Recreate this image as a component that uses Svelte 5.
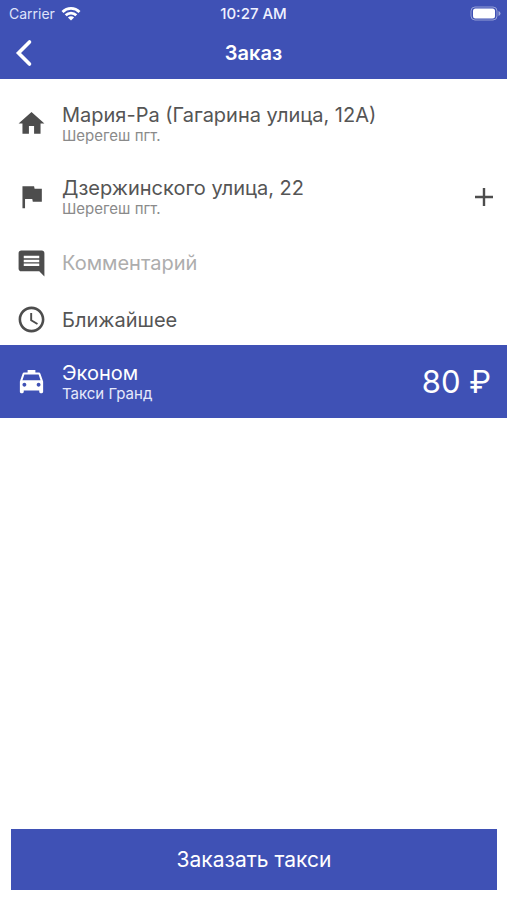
<script>
  let comment = $state('');
</script>

<div class="screen">
  <header>
    <div class="status">
      <div class="carrier">
        <span>Carrier</span>
        <svg width="20" height="14" viewBox="0 0 20 14" fill="none" stroke="#fff" stroke-width="2.8" aria-hidden="true">
          <path d="M1.500 4.900a12.200 12.200 0 0 1 17 0M4.700 8.300a7.600 7.600 0 0 1 10.600 0" />
          <path d="M6.900 10.500a4.400 4.400 0 0 1 6.200 0L10 13.600z" fill="#fff" stroke="none" />
        </svg>
      </div>
      <span class="time">10:27 AM</span>
      <div class="battery">
        <svg width="31" height="15" viewBox="0 0 31 15" aria-hidden="true">
          <rect x="1" y="1" width="26" height="13" rx="4" fill="none" stroke="#fff" stroke-opacity=".45" />
          <rect x="3" y="2.500" width="22" height="10" rx="2.500" fill="#fff" />
          <path d="M28.500 5q2 .8 2 2.500t-2 2.500z" fill="#fff" fill-opacity=".5" />
        </svg>
      </div>
    </div>
    <div class="nav">
      <button class="back" aria-label="Назад">
        <svg width="18" height="28" viewBox="0 0 18 28" fill="none" stroke="#fff" stroke-width="3.600" stroke-linecap="round" stroke-linejoin="miter" aria-hidden="true">
          <path d="M14.500 3 3.500 14l11 11" />
        </svg>
      </button>
      <h1>Заказ</h1>
    </div>
  </header>

  <main>
    <section class="route">
      <div class="row tall">
        <svg class="icon" viewBox="0 0 24 24" aria-hidden="true"><path d="M10 20v-6h4v6h5v-8h3L12 3 2 12h3v8z" /></svg>
        <div class="text">
          <span class="title">Мария-Ра (Гагарина улица, 12А)</span>
          <span class="sub">Шерегеш пгт.</span>
        </div>
      </div>
      <div class="row tall">
        <svg class="icon" viewBox="0 0 24 24" aria-hidden="true"><path d="M14.400 6 14 4H5v17h2v-7h5.600l.4 2h7V6z" /></svg>
        <div class="text">
          <span class="title">Дзержинского улица, 22</span>
          <span class="sub">Шерегеш пгт.</span>
        </div>
        <button class="add" aria-label="Добавить адрес">
          <svg width="20" height="20" viewBox="0 0 20 20" stroke="#4d4d4d" stroke-width="2.400" aria-hidden="true"><path d="M10 1v18M1 10h18" /></svg>
        </button>
      </div>
      <label class="row comment">
        <svg class="icon" viewBox="0 0 24 24" aria-hidden="true"><path d="M21.990 4c0-1.100-.89-2-1.990-2H4c-1.100 0-2 .9-2 2v12c0 1.100.9 2 2 2h14l4 4-.01-18zM18 14H6v-2h12v2zm0-3H6V9h12v2zm0-3H6V6h12v2z" /></svg>
        <input type="text" placeholder="Комментарий" aria-label="Комментарий" bind:value={comment} />
      </label>
      <div class="row when">
        <svg class="icon" viewBox="0 0 24 24" aria-hidden="true"><path d="M11.990 2C6.470 2 2 6.480 2 12s4.470 10 9.990 10C17.520 22 22 17.520 22 12S17.520 2 11.990 2zM12 20c-4.420 0-8-3.580-8-8s3.580-8 8-8 8 3.580 8 8-3.580 8-8 8zm.5-13H11v6l5.250 3.150.75-1.230-4.500-2.670z" /></svg>
        <span class="title">Ближайшее</span>
      </div>
    </section>

    <section class="row tall tariff">
      <svg class="icon" viewBox="0 0 24 24" aria-hidden="true"><path d="M18.920 6.010C18.720 5.420 18.160 5 17.500 5H15V3H9v2H6.500c-.66 0-1.210.42-1.420 1.010L3 12v8c0 .55.45 1 1 1h1c.55 0 1-.45 1-1v-1h12v1c0 .55.45 1 1 1h1c.55 0 1-.45 1-1v-8l-2.080-5.990zM6.500 16c-.83 0-1.500-.67-1.500-1.500S5.670 13 6.500 13s1.500.67 1.500 1.500S7.330 16 6.500 16zm11 0c-.83 0-1.500-.67-1.500-1.500s.67-1.500 1.500-1.500 1.500.67 1.500 1.500-.67 1.500-1.500 1.500zM5 11l1.500-4.500h11L19 11H5z" /></svg>
      <div class="text">
        <span class="title">Эконом</span>
        <span class="sub">Такси Гранд</span>
      </div>
      <span class="price">80 ₽</span>
    </section>
  </main>

  <footer>
    <button class="order">Заказать такси</button>
  </footer>
</div>

<style>
  :global(body) {
    margin: 0;
    background: #fff;
  }

  .screen {
    display: flex;
    flex-direction: column;
    min-height: 100vh;
    box-sizing: border-box;
    font-family: Inter, 'Noto Sans', sans-serif;
    color: #555;
  }

  button {
    border: 0;
    padding: 0;
    background: none;
    font: inherit;
    cursor: pointer;
  }

  svg {
    display: block;
    flex: none;
  }

  header {
    background: #3f51b5;
    color: #fff;
  }

  .status {
    display: grid;
    grid-template-columns: 1fr auto 1fr;
    align-items: center;
    height: 27px;
    padding: 0 6px;
  }

  .carrier {
    display: flex;
    align-items: center;
    gap: 6px;
    padding-left: 3px;
    color: #dfe3fa;
    font-size: 14px;
  }

  .time {
    color: #f0f2ff;
    font-size: 15px;
    font-weight: 500;
  }

  .battery {
    justify-self: end;
  }

  .nav {
    display: grid;
    grid-template-columns: 1fr auto 1fr;
    align-items: center;
    height: 52px;
    padding: 0 15px;
  }

  .back {
    justify-self: start;
  }

  h1 {
    margin: 0;
    font-size: 20px;
    line-height: 24px;
    font-weight: 600;
  }

  main {
    flex: 1;
  }

  .route {
    padding-top: 8px;
  }

  .row {
    display: flex;
    align-items: center;
    gap: 15px;
    padding: 0 16px;
    box-sizing: border-box;
  }

  .tall {
    min-height: 73px;
  }

  .comment {
    min-height: 58px;
    padding-top: 2px;
  }

  .when {
    min-height: 54px;
    padding-top: 3px;
  }

  .icon {
    width: 31px;
    height: 31px;
    fill: #4d4d4d;
  }

  .text {
    display: flex;
    flex-direction: column;
    flex: 1;
    min-width: 0;
  }

  .title {
    font-size: 20px;
    line-height: 24px;
  }

  .sub {
    color: #8a8a8a;
    font-size: 15px;
    line-height: 18px;
  }

  .add {
    margin-right: -3px;
  }

  input {
    flex: 1;
    min-width: 0;
    border: 0;
    padding: 0;
    outline: none;
    background: none;
    color: #555;
    font-family: inherit;
    font-size: 20px;
    line-height: 24px;
  }

  input::placeholder {
    color: #adadad;
    opacity: 1;
  }

  .tariff {
    background: #3f51b5;
    color: #fff;
  }

  .tariff .icon {
    fill: #fff;
  }

  .tariff .sub {
    color: #e6e9fb;
  }

  .price {
    font-size: 31px;
    line-height: 40px;
  }

  footer {
    padding: 10px 10px 10px 11px;
  }

  .order {
    display: block;
    width: 100%;
    height: 61px;
    background: #3f51b5;
    color: #fff;
    font-size: 21px;
  }
</style>
